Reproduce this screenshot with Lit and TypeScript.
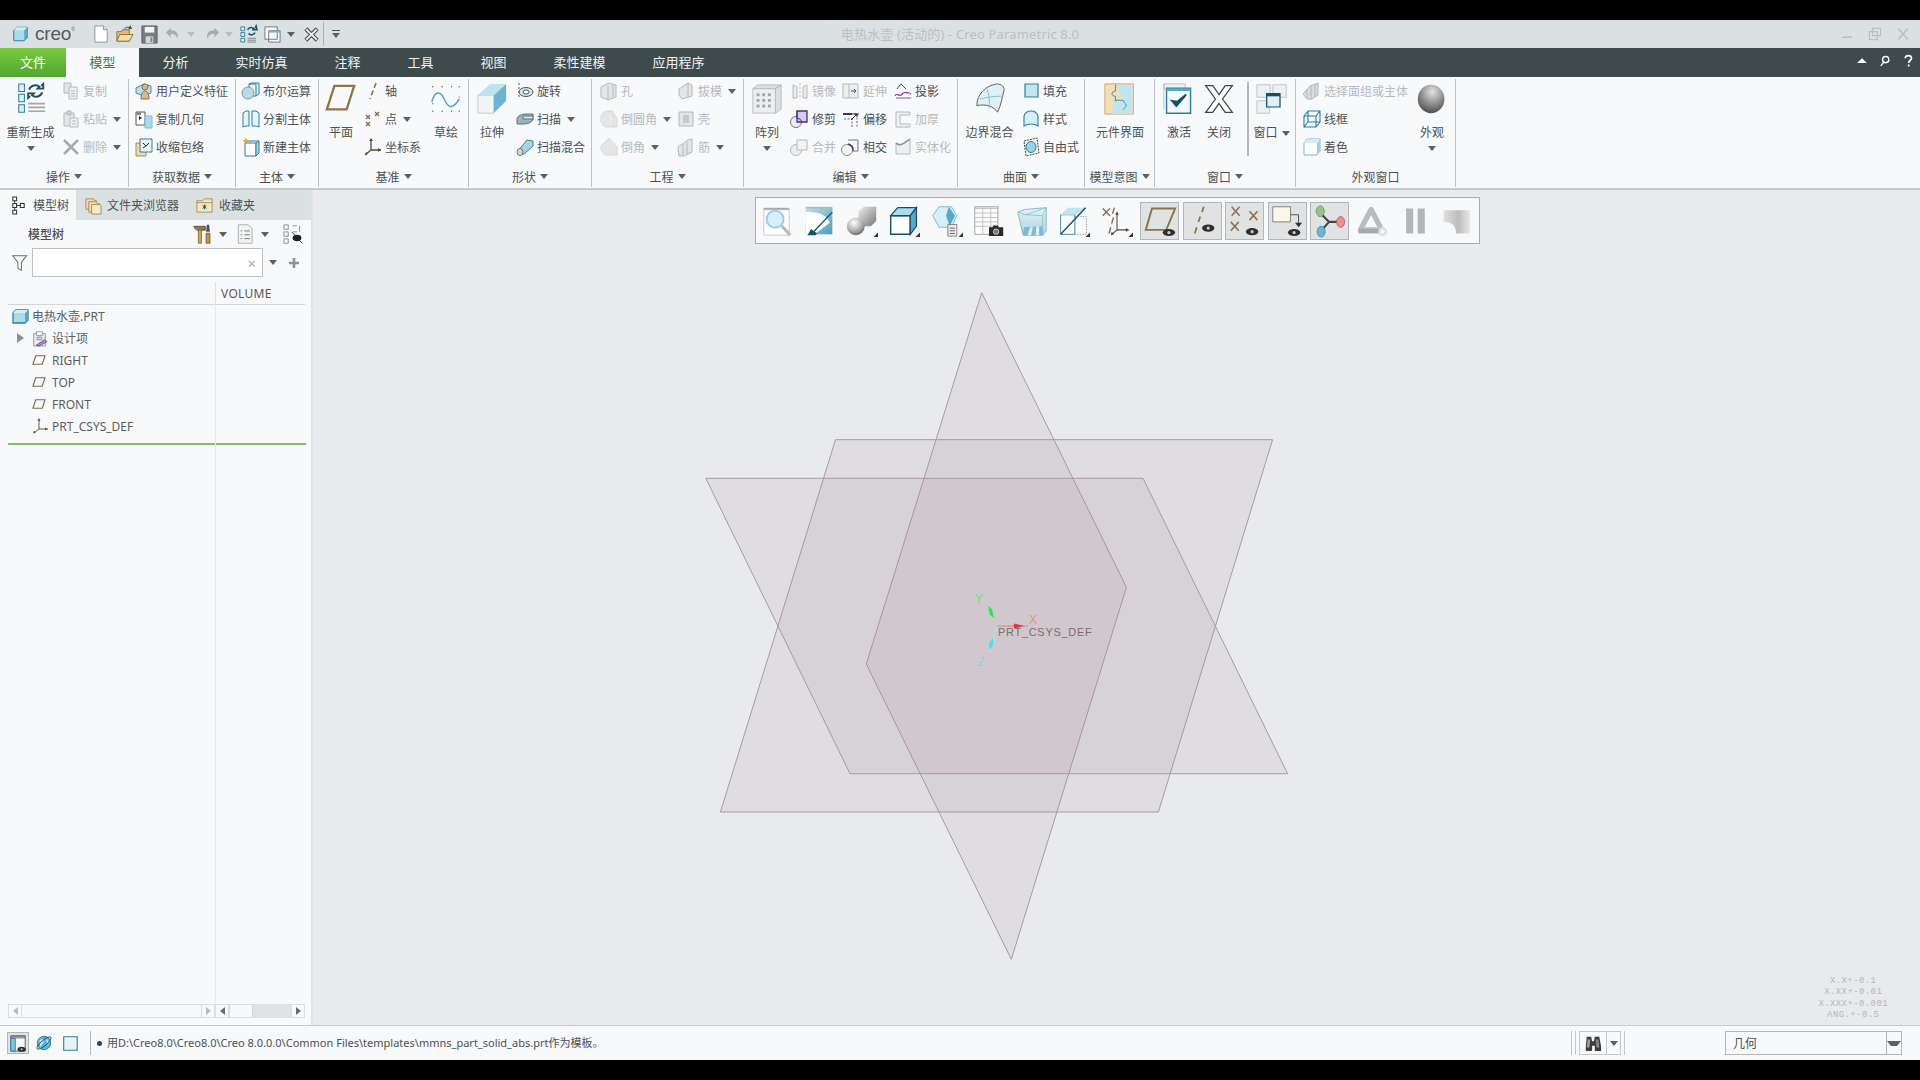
import { LitElement, html, css, svg } from "lit";
import { customElement } from "lit/decorators.js";

const S = (body: unknown, vb = 20) => html`<svg viewBox="0 0 ${vb} ${vb}">${body}</svg>`;
const G = "#b4b8ba", GL = "#e3e5e6", T = "#2b7f9c", C = "#a9dcea", B = "#8a6f45";

const I: Record<string, unknown> = {
  copy: S(svg`<path d="M3 2h7v10H3z" fill="${GL}" stroke="${G}"/><path d="M8 6h8v12H8z" fill="#eef0f1" stroke="${G}"/><path d="M10 10h4M10 12.5h4M10 15h4" stroke="${G}"/>`),
  paste: S(svg`<path d="M3 4h10v13H3z" fill="${GL}" stroke="${G}"/><path d="M6 2h4v4H6z" fill="#d2d4d5" stroke="${G}"/><path d="M9 9h8v9H9z" fill="#f0f1f2" stroke="${G}"/><path d="M11 12h4M11 15h4" stroke="${G}"/>`),
  del: S(svg`<path d="M3 3l14 14M17 3L3 17" stroke="#a6aaac" stroke-width="2.6"/>`),
  udf: S(svg`<path d="M2 7l8-4 7 2v7l-7 3-8-3z" fill="#bcdfee" stroke="#4d8aa5"/><circle cx="11" cy="6" r="3" fill="#d9b98a" stroke="#8a6f45"/><path d="M7 18c0-6 2-8 4-8s4 2 4 8z" fill="#d9b98a" stroke="#8a6f45"/>`),
  copygeo: S(svg`<path d="M2 3h9v13H2z" fill="#fff" stroke="#555"/><path d="M5 7l3 2-3 2z" fill="#222"/><path d="M11 7h7v12h-7z" fill="${C}" stroke="#7bbdd0"/><path d="M2 3h5v3H2z" fill="#888"/>`),
  shrink: S(svg`<path d="M2 6h10v13H2z" fill="#f0d9ad" stroke="#a88a55"/><path d="M6 2h12v13H6z" fill="#e9f6fb" stroke="${T}"/><path d="M9 6l3 3 3-3M9 11l3-2" stroke="#222" fill="none"/>`),
  bool: S(svg`<path d="M8 3l3-1h7v11l-3 2H8z" fill="#e7f3f8" stroke="${T}"/><path d="M15 3v12M8 3h7" stroke="${T}"/><circle cx="7" cy="12" r="6" fill="#b9dbe8" stroke="#7a9aa8"/>`),
  split: S(svg`<path d="M2 4l3-2h3v15H5l-3 1z" fill="#e7f3f8" stroke="${T}"/><path d="M11 2h4l3 2v14l-3-1h-4z" fill="#e7f3f8" stroke="${T}"/>`),
  newbody: S(svg`<path d="M4 6h11v13H4z" fill="#fff" stroke="${T}"/><path d="M15 6l3-2v12l-3 3z" fill="${C}" stroke="${T}"/><path d="M4 6l3-2h11" fill="none" stroke="${T}"/><path d="M5 0l1 3 3 1-3 1-1 3-1-3-3-1 3-1z" fill="#e8a322"/>`),
  axis: S(svg`<path d="M13 2l-6 16" stroke="${B}" stroke-width="1.6" stroke-dasharray="5 3" fill="none"/>`),
  point: S(svg`<path d="M3 6l4 4M7 6l-4 4M12 3l4 4M16 3l-4 4M3 13l4 4M7 13l-4 4" stroke="${B}" stroke-width="1.4" fill="none"/>`),
  csys: S(svg`<path d="M8 2v11M8 13h10M8 13l-6 5" stroke="#554a3a" stroke-width="1.3" fill="none"/><path d="M8 1l2 3H6zM18 13l-3-2v4zM2 18l1-3 2 2z" fill="#554a3a"/>`),
  revolve: S(svg`<ellipse cx="11" cy="11" rx="7" ry="4.5" fill="#cfe7ef" stroke="#555"/><ellipse cx="11" cy="11" rx="3" ry="2" fill="#f7f9fb" stroke="#555"/><path d="M4 2v16" stroke="#555" stroke-dasharray="2 2"/>`),
  sweep: S(svg`<path d="M2 10c0-3 5-5 9-5h7v5c0 3-6 5-9 5H2z" fill="#9eb4bb" stroke="#5f7079"/><path d="M8 7h10v3H8z" fill="#d3eaf2" stroke="#5f7079"/>`),
  blend: S(svg`<path d="M3 14L12 3l6 1v5l-9 8-5 1z" fill="#a9d2e4" stroke="#3f7d99"/><ellipse cx="5" cy="15" rx="3" ry="3.6" fill="#cfd2d3" stroke="#777"/>`),
  hole: S(svg`<path d="M2 6l8-4 7 2v12l-8 3-7-3z" fill="${GL}" stroke="${G}"/><path d="M9 5v14M14 4v12" stroke="${G}"/>`),
  round: S(svg`<path d="M2 9c0-4 3-7 7-7h4l5 7v9H6l-4-5z" fill="${GL}" stroke="#d5d7d8"/><path d="M9 2l5 7v9" fill="#f1f2f3" stroke="#d5d7d8"/>`),
  chamfer: S(svg`<path d="M2 9l7-7h3l6 7v9H6l-4-5z" fill="${GL}" stroke="#d5d7d8"/><path d="M12 2l6 7" stroke="#fff"/>`),
  draft: S(svg`<path d="M3 8l9-6 4 2v11l-10 3-3-4z" fill="${GL}" stroke="${G}"/><path d="M12 2v14" stroke="${G}"/>`),
  shell: S(svg`<path d="M3 3h14v14H3z" fill="${GL}" stroke="${G}"/><path d="M7 6h6v8H7z" fill="#c6c9ca"/>`),
  rib: S(svg`<path d="M2 10l10-7 4-1v13l-8 4H3z" fill="${GL}" stroke="${G}"/><path d="M7 7v11M11 5v12" stroke="${G}"/>`),
  mirror: S(svg`<path d="M3 4l4 2v11H3zM17 4l-4 2v11h4z" fill="#e9ebec" stroke="${G}"/><path d="M10 2v16" stroke="${G}" stroke-dasharray="2 2"/>`),
  extend: S(svg`<path d="M2 3h15v14H2z" fill="#eceeef" stroke="${G}"/><path d="M8 3v14" stroke="${G}"/><path d="M10 10h5M13 8l2 2-2 2" stroke="#555" fill="none"/>`),
  project: S(svg`<path d="M2 15c2-4 4 1 6-1s4-4 10-1" stroke="#8a4fa3" fill="none" stroke-width="1.3"/><path d="M3 17h15" stroke="#8a4fa3"/><path d="M8 3l-4 5M8 3l5 5" stroke="#445" fill="none"/>`),
  trim: S(svg`<circle cx="6" cy="13" r="5.5" fill="#eceeef" stroke="#777"/><path d="M7 2h10v11H7z" fill="#d8c9ef" stroke="#4b2a80" stroke-width="1.3"/><path d="M7 2v7a6 6 0 0 1 5 4" fill="none" stroke="#4b2a80"/>`),
  offset: S(svg`<path d="M2 5h9" stroke="#4b2a80" stroke-width="2"/><path d="M16 5v13" stroke="#666" stroke-dasharray="2 1.5"/><path d="M11 5h7" stroke="#4b2a80"/><path d="M3 10h8v8" fill="none" stroke="#666" stroke-dasharray="2 1.5"/><path d="M10 11l6-6M13 5h3v3" stroke="#222" fill="none"/>`),
  thicken: S(svg`<path d="M3 3h14v3H7v9h10v3H3z" fill="#f0f1f2" stroke="${G}"/>`),
  merge: S(svg`<circle cx="6" cy="13" r="5.5" fill="#eceeef" stroke="${G}"/><path d="M7 3h10v10H7z" fill="#f2f3f4" stroke="${G}"/>`),
  intersect: S(svg`<circle cx="6" cy="13" r="5.5" fill="#f4f5f6" stroke="#888"/><path d="M7 3h10v11h-5" fill="#f4f5f6" stroke="#777"/><path d="M7 7a6 6 0 0 1 5 7" fill="none" stroke="#4b2a80" stroke-width="1.6"/>`),
  solidify: S(svg`<path d="M3 6l5 2 9-6v15H3z" fill="#eceeef" stroke="${G}"/><path d="M3 6c4 4 8 0 14-4" fill="none" stroke="#8d9193" stroke-width="1.5"/>`),
  fill: S(svg`<defs><pattern id="h" width="2.4" height="2.4" patternUnits="userSpaceOnUse" patternTransform="rotate(45)"><rect width="2.4" height="2.4" fill="#b6e0ee"/><path d="M0 0v2.4" stroke="#edf8fb"/></pattern></defs><path d="M4 3h13v13H4z" fill="url(#h)" stroke="#2f7f9e" stroke-width="1.2"/>`),
  style: S(svg`<path d="M3 17V7c1-3 3-5 7-5s6 2 7 5v10c-3-2-5-2-7-2s-4 0-7 2z" fill="#d6eef6" stroke="#2f7f9e" stroke-width="1.1"/>`),
  freestyle: S(svg`<path d="M3 4l13-3 2 15-13 3z" fill="#f3f5f6" stroke="#444" stroke-dasharray="2 1"/><ellipse cx="10" cy="10" rx="5" ry="5.5" fill="#9ad3e6" stroke="#2f7f9e"/>`),
  selbody: S(svg`<path d="M1 13l7-8 8-3v12l-6 4H5z" fill="#d9dbdc" stroke="${G}"/><path d="M5 8v9M9 5v13M13 3v12" stroke="${G}"/>`),
  wire: S(svg`<path d="M2 7h12v11H2zM6 2h12v11H6zM2 7l4-5M14 7l4-5M14 18l4-5M2 18l4-5" fill="none" stroke="${T}" stroke-width="1.1"/>`),
  shade: S(svg`<path d="M2 6l3-4h13v12l-3 4H2z" fill="#fff" stroke="#7fb9cf"/><path d="M15 6l3-4v12l-3 4z" fill="#9ed3e6"/><path d="M2 6l3-4h13l-3 4z" fill="#d3edf5"/>`),

  regen: S(svg`<path d="M4 1h6v8H4zM4 12h6v8H4zM4 23h6v8H4z" fill="#dff1f7" stroke="${T}" stroke-width="1.1"/><path d="M15 7a7 7 0 0 1 11-3l-2 2h6V1l-2 2" fill="none" stroke="#1d4e63" stroke-width="2"/><path d="M29 10a7 7 0 0 1-11 3l2-2h-6v5l2-2" fill="none" stroke="#1d4e63" stroke-width="2"/><path d="M14 22h18M14 26h18M14 30h18" stroke="#a4a4a4" stroke-width="1.8"/>`, 34),
  plane: S(svg`<path d="M10 3h21l-8 25H2z" fill="#f7f9fb" stroke="#8f7444" stroke-width="2.4"/>`, 34),
  sketch: S(svg`<g fill="#555"><circle cx="3" cy="4" r=".7"/><circle cx="13" cy="4" r=".7"/><circle cx="23" cy="4" r=".7"/><circle cx="31" cy="4" r=".7"/><circle cx="3" cy="30" r=".7"/><circle cx="13" cy="30" r=".7"/><circle cx="23" cy="30" r=".7"/><circle cx="31" cy="30" r=".7"/><circle cx="31" cy="15" r=".7"/><circle cx="3" cy="22" r=".7"/></g><path d="M2 20c3-12 9-12 13-3s9 12 16 0" fill="none" stroke="#4da6c8" stroke-width="1.6"/>`, 34),
  extrude: S(svg`<path d="M2 13h17v19H2z" fill="#f3f4f5" stroke="#c6c8c9"/><path d="M2 13L15 1h17L19 13z" fill="#bfe2ef"/><path d="M19 13L32 1v18L19 32z" fill="#6fb4cf"/>`, 34),
  pattern: S(svg`<path d="M2 6h24v26H2z" fill="#eceeef" stroke="#b9bcbe"/><path d="M2 6l5-4h25l-6 4zM26 6l6-4v26l-6 4z" fill="#dcdfe0" stroke="#b9bcbe"/><g fill="#a0a4a6"><rect x="6" y="11" width="3" height="3"/><rect x="12" y="11" width="3" height="3"/><rect x="18" y="11" width="3" height="3"/><rect x="6" y="17" width="3" height="3"/><rect x="12" y="17" width="3" height="3"/><rect x="18" y="17" width="3" height="3"/><rect x="6" y="23" width="3" height="3"/><rect x="12" y="23" width="3" height="3"/><rect x="18" y="23" width="3" height="3"/></g>`, 34),
  boundary: S(svg`<path d="M3 24C3 12 12 3 24 1c6 0 8 4 8 6-2 8-3 16-7 24-4-6-12-9-22-7z" fill="#dff1f7" stroke="#555"/><path d="M14 7c2 6 3 12 2 20M6 17c8-2 16-3 25-3" fill="none" stroke="#8cbccc"/>`, 34),
  iface: S(svg`<path d="M1 1h32v34H1z" fill="#f4dfb5" stroke="#c9a567"/><path d="M13 2h19v33H9v-4c2-1 4-2 4-4s-3-3-3-5 4-3 6-3 5 1 5 3-3 3-3 5H9v8M13 2v7c-2 0-4 1-4 3s2 3 4 3v6h10" fill="#bfe5f1"/><path d="M13 2v7c-3 0-4 2-4 3s1 3 4 3v5c2-1 7-1 9 0 0 3 3 3 3 5s-3 3-3 5" fill="none" stroke="#3f7d99"/>`, 36),
  activate: S(svg`<path d="M1 1h24v6H1z" fill="#eef0f1" stroke="#bbb"/><path d="M1 1v28" stroke="#bbb"/><path d="M4 6h27v28H4z" fill="#f3fafd" stroke="#2b7f9c" stroke-width="1.6"/><path d="M4 6h27v3H4z" fill="#5ba8c4"/><path d="M10 20l5 6 11-13-10 8z" fill="#14506c" stroke="#14506c" stroke-width="2"/>`, 36),
  closeX: S(svg`<path d="M3 3h8l7 10 7-10h8L22 18l11 15h-8l-7-10-7 10H3l11-15z" fill="#fff" stroke="#404548" stroke-width="1.4"/>`, 36),
  windows: S(svg`<path d="M1 2h15v14H1zM19 2h15v14H19zM1 20h14v14H1z" fill="#eef0f1" stroke="#bdbfc0"/><path d="M12 12h15v15H12z" fill="#ddf0f7" stroke="#14506c" stroke-width="1.4"/><path d="M12 12h15v3H12z" fill="#14506c"/>`, 36),
  sphere: S(svg`<defs><radialGradient id="sp" cx=".55" cy=".25" r=".85"><stop offset="0" stop-color="#e4e4e4"/><stop offset=".5" stop-color="#8e8e8e"/><stop offset="1" stop-color="#3c3c3c"/></radialGradient></defs><ellipse cx="17" cy="18" rx="15" ry="16" fill="url(#sp)"/>`, 36),

  tbZoom: S(svg`<path d="M3 5h27v27H3z" fill="#fff" stroke="#c8c8c8"/><path d="M3 3h27v2H3z" fill="#aaa"/><circle cx="15" cy="15" r="9" fill="#d7f0f9" stroke="#9ccbdc" stroke-width="2"/><path d="M22 22l9 10" stroke="#bbb" stroke-width="3.2"/>`, 34),
  tbFit: S(svg`<defs><linearGradient id="fg" x1="0" y1="0" x2="1" y2="1"><stop offset="0" stop-color="#bfe2ef"/><stop offset="1" stop-color="#4f9dbb"/></linearGradient></defs><path d="M3 3h30v30H3z" fill="url(#fg)"/><path d="M3 2h30v2H3z" fill="#b8b8b8"/><path d="M3 8c14-1 25 4 27 12L13 33H3z" fill="#fff"/><path d="M5 34l4-7 7 5-2 2z" fill="#14506c"/><path d="M12 30L33 8" stroke="#14506c" stroke-width="1.5"/>`, 36),
  tbShade: S(svg`<defs><radialGradient id="sp2" cx=".4" cy=".3" r=".8"><stop offset="0" stop-color="#fff"/><stop offset=".6" stop-color="#aaa"/><stop offset="1" stop-color="#555"/></radialGradient><linearGradient id="gb" x1="0" y1="0" x2="1" y2="1"><stop offset="0" stop-color="#eee"/><stop offset="1" stop-color="#777"/></linearGradient></defs><path d="M14 7l6-5h14v16l-6 6H14z" fill="url(#gb)"/><circle cx="11" cy="24" r="10" fill="url(#sp2)"/><path d="M36 36h-5l5-5z" fill="#333"/>`, 36),
  tbView: S(svg`<path d="M3 12h22v21H3z" fill="#fff" stroke="#14506c" stroke-width="1.6"/><path d="M3 12l8-9h21l-7 9z" fill="#a9dcea" stroke="#14506c" stroke-width="1.4"/><path d="M25 12l7-9v21l-7 9z" fill="#5ba8c4" stroke="#14506c" stroke-width="1.4"/><path d="M36 36h-5l5-5z" fill="#333"/>`, 36),
  tbManage: S(svg`<path d="M2 12L9 2h14l6 10-6 13H9z" fill="#d6eef6" stroke="#6fb4cf"/><path d="M20 2l7 10-6 12-4-12z" fill="#5ba8c4"/><path d="M19 22h10v13H19z" fill="#eee" stroke="#777"/><path d="M21 26h6M21 29h6M21 32h6" stroke="#555"/><path d="M36 36h-5l5-5z" fill="#333"/>`, 36),
  tbTable: S(svg`<path d="M2 2h26v31H2z" fill="#fff" stroke="#9a9a9a"/><path d="M2 2h26v2H2zM2 9h26M2 14h26M2 19h26M2 24h26M11 4v29M20 4v29" stroke="#bbb" fill="none"/><path d="M18 25h4l1-2h5l1 2h5v10H18z" fill="#2b2b2b"/><circle cx="26" cy="30" r="3" fill="#777" stroke="#ddd"/>`, 36),
  tbSection: S(svg`<defs><linearGradient id="sc" x1="0" y1="0" x2="0" y2="1"><stop offset="0" stop-color="#e4f3f8"/><stop offset="1" stop-color="#a9d3e1"/></linearGradient></defs><path d="M2 8l8-3 24-2v26l-4 5H8z" fill="url(#sc)" stroke="#7bb4c7"/><path d="M2 8l9 3 23-8M11 11l19 1 4-9M30 12v22" fill="none" stroke="#8fc0d0"/><path d="M9 25l21-1v10H8z" fill="#7fb9cd"/><path d="M13 34l3-9h3l-2 9zM22 34l1-10h3v10z" fill="#dff1f6"/>`, 36),
  tbCut: S(svg`<path d="M3 11h16v22H3z" fill="#fff" stroke="#2b7f9c"/><path d="M3 11l8-8h21l-13 8z" fill="#bfe5f1"/><path d="M3 33L31 3" stroke="#14506c" stroke-width="1.6"/><path d="M19 13h13v20H11" fill="none" stroke="#888" stroke-dasharray="1.5 1.5"/><path d="M36 36h-5l5-5z" fill="#333"/>`, 36),
  tbDisp: S(svg`<path d="M2 4l8 8M10 4l-8 8" stroke="${B}" stroke-width="1.6"/><path d="M15 3l-2 7M14 14l-2 7M11 25l-2 7" stroke="${B}" stroke-width="1.6"/><path d="M18 28V10M18 28h12M18 28l-6 5" stroke="#554a3a" stroke-width="1.2" fill="none"/><path d="M18 7l2 4h-4zM32 28l-4-2v4zM11 34l1-4 3 3z" fill="#554a3a"/><path d="M36 36h-5l5-5z" fill="#333"/>`, 36),
  eyePlane: S(svg`<path d="M9 4h26l-10 24H2z" fill="none" stroke="#8f7444" stroke-width="2.2"/><ellipse cx="28" cy="31" rx="7" ry="4" fill="#2e2e2e"/><circle cx="28" cy="31" r="1.8" fill="#ccc"/>`, 36),
  eyeAxis: S(svg`<path d="M20 2l-2 6M16 13l-2 6M12 25l-2 7" stroke="#8f7444" stroke-width="2"/><ellipse cx="25" cy="26" rx="7" ry="4" fill="#2e2e2e"/><circle cx="25" cy="26" r="1.8" fill="#ccc"/>`, 36),
  eyePoint: S(svg`<path d="M3 2l9 10M12 2L3 12M23 7l9 10M32 7l-9 10M2 19l9 10M11 19l-9 10" stroke="#8f7444" stroke-width="1.8"/><ellipse cx="26" cy="30" rx="7" ry="4" fill="#2e2e2e"/><circle cx="26" cy="30" r="1.8" fill="#ccc"/>`, 36),
  eyeNote: S(svg`<path d="M2 2h20v17H2z" fill="#fdf6e6" stroke="#777"/><path d="M22 11h9v10" fill="none" stroke="#444"/><path d="M27 20h8l-4 5z" fill="#333"/><ellipse cx="26" cy="31" rx="7" ry="4" fill="#2e2e2e"/><circle cx="26" cy="31" r="1.8" fill="#ccc"/>`, 36),
  tbTree: S(svg`<path d="M7 9l10 10 13 0M17 19L8 29" stroke="#444" stroke-width="2.4" fill="none"/><ellipse cx="7" cy="7" rx="4.5" ry="6" fill="#98c48a" stroke="#6b9a5f"/><ellipse cx="30" cy="19" rx="4.5" ry="6" fill="#ef8f8a" stroke="#b5625e"/><ellipse cx="8" cy="30" rx="4.5" ry="6" fill="#6fb4d6" stroke="#4b8cab"/>`, 36),
  tbPlay: S(svg`<path d="M17 5l12 23H5z" fill="none" stroke="#b9bbbc" stroke-width="6" stroke-linejoin="round"/><path d="M3 27h26v5H3z" fill="#a6a9aa"/><circle cx="30" cy="30" r="5" fill="#dcdedf"/><path d="M28 27l5 3-5 3z" fill="#fff"/>`, 36),
  tbPause: S(svg`<path d="M8 4h8v28H8zM21 4h8v28h-8z" fill="#b3b6b7"/>`, 36),
  tbFinish: S(svg`<defs><linearGradient id="fn" x1="0" y1="0" x2="1" y2="0"><stop offset="0" stop-color="#dfdfdf"/><stop offset=".55" stop-color="#bdbdbd"/><stop offset="1" stop-color="#e8e8e8"/></linearGradient></defs><path d="M3 6h30v26H17c0-8-4-13-14-13z" fill="url(#fn)"/>`, 36),

  tabTree: S(svg`<path d="M4 1h4v4H4zM4 8h4v4H4zM4 15h4v4H4zM12 8h4v4h-4z" fill="#fff" stroke="#333" stroke-width="1.1"/><path d="M6 5v3M6 12v3M8 10h4" stroke="#333"/>`),
  tabFolders: S(svg`<path d="M2 3h8l1 2h2v9H2z" fill="#f1dcae" stroke="#a78d5c"/><path d="M5 6h8l1 2h2v9H5z" fill="#f1dcae" stroke="#a78d5c"/><path d="M8 9h9l1 2v8H8z" fill="#f7e8c5" stroke="#a78d5c"/>`),
  tabFav: S(svg`<path d="M2 5h6l2-2h8v14H2z" fill="#f5e6c4" stroke="#a78d5c"/><path d="M2 7h16" stroke="#a78d5c"/><path d="M10 9v5M8 10l4 3M12 10l-4 3" stroke="#14506c"/>`),
  hammer: S(svg`<path d="M1 3h15v5h-5v1H7V8c-3 0-5-2-6-5z" fill="#8a7a58" stroke="#4b3f28"/><path d="M7 8h4v17H7z" fill="#d3a95f" stroke="#7a5b2b"/><path d="M18 1h3l1 9h-5z" fill="#50514f"/><path d="M17 12h5v13h-5z" fill="#c8943f" stroke="#6c4b1e"/>`, 26),
  list: S(svg`<path d="M3 1h13l5 5v19H3z" fill="#f2f3f4" stroke="#9a9ea0"/><path d="M6 9h2M11 9h7M6 14h2M11 14h7M6 19h2M11 19h7" stroke="#555"/>`, 26),
  hide: S(svg`<path d="M1 1h5v5H1zM1 9h5v5H1zM1 17h5v5H1zM11 2h5M19 2v7M11 9h5" fill="none" stroke="#8c9092" stroke-width="1.1"/><ellipse cx="16" cy="16" rx="5" ry="3.6" fill="#222"/><path d="M10 9l12 13" stroke="#222"/>`, 24),
  filter: S(svg`<path d="M1 2h16l-6 8v9l-4-2v-7z" fill="#fff" stroke="#676b6d" stroke-width="1.2"/>`, 20),
  plus: S(svg`<path d="M6 1v10M1 6h10" stroke="#8f9395" stroke-width="2.6"/>`, 12),
  prt: S(svg`<path d="M1 5l3-3h12v10l-3 3H1z" fill="#a9dcea" stroke="#2b7f9c" stroke-width="1.3"/><path d="M13 5l3-3v10l-3 3z" fill="#5ba8c4"/><path d="M1 5l3-3h12l-3 3z" fill="#d3edf5"/>`, 17),
  design: S(svg`<path d="M2 4h13v14H2z" fill="#e9eef0" stroke="#8c9092"/><path d="M5 2h7v4H5z" fill="#fff" stroke="#8c9092"/><path d="M6 8h5v3H6z" fill="#ddd" stroke="#888"/><path d="M5 17l9-6 3 2-9 5z" fill="#a78bd1" stroke="#6d4fa0"/>`, 18),
  planeS: S(svg`<path d="M4 3h10l-3 9H1z" fill="none" stroke="#7d6a45" stroke-width="1.2"/>`, 15),
  csysS: S(svg`<path d="M7 1v10M7 11h9M7 11l-5 4" stroke="#6a5a3d" fill="none"/><path d="M7 0l1.5 3h-3zM16 11l-3-1.5v3zM1 15.5l1-3 2 2z" fill="#6a5a3d"/>`, 17),

  stLayout: S(svg`<path d="M2 2h16v17H2z" fill="#f7f9fb" stroke="#555"/><path d="M2 2h16v3H2z" fill="#555" opacity=".6"/><path d="M2 5h5v14H2z" fill="#7ec6e0" stroke="#2b7f9c"/><ellipse cx="14" cy="17" rx="4.5" ry="2.8" fill="#2e2e2e"/><circle cx="14" cy="17" r="1.1" fill="#ccc"/>`),
  stGlobe: S(svg`<circle cx="10" cy="10" r="7.5" fill="#5fb5df" stroke="#356f90"/><path d="M5 7c3-3 6 0 4 3s-3 3-3 6M12 5c3 2 4 4 2 7" fill="#cfeaf6"/><ellipse cx="10" cy="10" rx="10" ry="3" transform="rotate(-40 10 10)" fill="none" stroke="#1d4e63"/>`),
  stSquare: S(svg`<path d="M3 3h15v15H3z" fill="#e8f3f8" stroke="#2b7f9c" stroke-width="1.2"/>`),
  binoc: S(svg`<path d="M3 3h5l1 5h2l1-5h5l2 11v5h-7v-6H9v6H2v-5z" fill="#3e3e3e"/><path d="M4 6h3l-1 9H3z" fill="#9a9a9a"/><path d="M13 6h3l1 9h-3z" fill="#8a8a8a"/>`),
};

const tri = html`<span class="tri"></span>`;

type Small = { i: string; t: string; d?: boolean; a?: boolean };
type Col = { w: number; big?: { i: string; t: string; a?: "below" | "inline" }; items?: Small[] };
type Group = { label: string; w: number; pad?: number; a?: boolean; cols: Col[]; sepAfter?: number };

const groups: Group[] = [
  { label: "操作", w: 129, a: true, cols: [
    { w: 61, big: { i: "regen", t: "重新生成", a: "below" } },
    { w: 68, items: [{ i: "copy", t: "复制", d: true }, { i: "paste", t: "粘贴", d: true, a: true }, { i: "del", t: "删除", d: true, a: true }] } ] },
  { label: "获取数据", w: 107, pad: 5, a: true, cols: [
    { w: 102, items: [{ i: "udf", t: "用户定义特征" }, { i: "copygeo", t: "复制几何" }, { i: "shrink", t: "收缩包络" }] } ] },
  { label: "主体", w: 83, pad: 5, a: true, cols: [
    { w: 78, items: [{ i: "bool", t: "布尔运算" }, { i: "split", t: "分割主体" }, { i: "newbody", t: "新建主体" }] } ] },
  { label: "基准", w: 150, a: true, cols: [
    { w: 44, big: { i: "plane", t: "平面" } },
    { w: 60, items: [{ i: "axis", t: "轴" }, { i: "point", t: "点", a: true }, { i: "csys", t: "坐标系" }] },
    { w: 46, big: { i: "sketch", t: "草绘" } } ] },
  { label: "形状", w: 123, a: true, cols: [
    { w: 46, big: { i: "extrude", t: "拉伸" } },
    { w: 77, items: [{ i: "revolve", t: "旋转" }, { i: "sweep", t: "扫描", a: true }, { i: "blend", t: "扫描混合" }] } ] },
  { label: "工程", w: 152, pad: 7, a: true, cols: [
    { w: 77, items: [{ i: "hole", t: "孔", d: true }, { i: "round", t: "倒圆角", d: true, a: true }, { i: "chamfer", t: "倒角", d: true, a: true }] },
    { w: 68, items: [{ i: "draft", t: "拔模", d: true, a: true }, { i: "shell", t: "壳", d: true }, { i: "rib", t: "筋", d: true, a: true }] } ] },
  { label: "编辑", w: 214, a: true, cols: [
    { w: 46, big: { i: "pattern", t: "阵列", a: "below" } },
    { w: 51, items: [{ i: "mirror", t: "镜像", d: true }, { i: "trim", t: "修剪" }, { i: "merge", t: "合并", d: true }] },
    { w: 52, items: [{ i: "extend", t: "延伸", d: true }, { i: "offset", t: "偏移" }, { i: "intersect", t: "相交" }] },
    { w: 65, items: [{ i: "project", t: "投影" }, { i: "thicken", t: "加厚", d: true }, { i: "solidify", t: "实体化", d: true }] } ] },
  { label: "曲面", w: 127, a: true, cols: [
    { w: 63, big: { i: "boundary", t: "边界混合" } },
    { w: 64, items: [{ i: "fill", t: "填充" }, { i: "style", t: "样式" }, { i: "freestyle", t: "自由式" }] } ] },
  { label: "模型意图", w: 70, a: true, cols: [ { w: 70, big: { i: "iface", t: "元件界面" } } ] },
  { label: "窗口", w: 141, a: true, sepAfter: 1, cols: [
    { w: 48, big: { i: "activate", t: "激活" } },
    { w: 32, big: { i: "closeX", t: "关闭" } },
    { w: 45, big: { i: "windows", t: "窗口", a: "inline" } } ] },
  { label: "外观窗口", w: 160, pad: 6, cols: [
    { w: 110, items: [{ i: "selbody", t: "选择面组或主体", d: true }, { i: "wire", t: "线框" }, { i: "shade", t: "着色" }] },
    { w: 40, big: { i: "sphere", t: "外观", a: "below" } } ] },
];

const menus = ["分析", "实时仿真", "注释", "工具", "视图", "柔性建模", "应用程序"];

const tools: { i: string; on?: boolean }[] = [
  { i: "tbZoom" }, { i: "tbFit" }, { i: "tbShade" }, { i: "tbView" }, { i: "tbManage" }, { i: "tbTable" }, { i: "tbSection" }, { i: "tbCut" }, { i: "tbDisp" },
  { i: "eyePlane", on: true }, { i: "eyeAxis", on: true }, { i: "eyePoint", on: true }, { i: "eyeNote", on: true }, { i: "tbTree", on: true },
  { i: "tbPlay" }, { i: "tbPause" }, { i: "tbFinish" },
];

const qat: { w: number; k: string }[] = [
  { w: 21, k: "new" }, { w: 24, k: "open" }, { w: 27, k: "save" }, { w: 20, k: "undo" }, { w: 16, k: "c" }, { w: 24, k: "redo" }, { w: 12, k: "c" },
  { w: 26, k: "regen" }, { w: 22, k: "win" }, { w: 16, k: "cd" }, { w: 24, k: "close" },
];
const Q: Record<string, unknown> = {
  new: S(svg`<path d="M3 1h9l4 4v13H3z" fill="#fff" stroke="#8c9092"/><path d="M12 1v4h4" fill="#dfe2e3" stroke="#8c9092"/>`),
  open: S(svg`<path d="M2 7h5l1-2h7v12H2z" fill="#e3bd72" stroke="#8f6f33"/><path d="M2 17l3-7h14l-4 7z" fill="#f4dea9" stroke="#8f6f33"/><path d="M10 4c2-2 4-2 6-1" fill="none" stroke="#444"/><path d="M16 0l2 4-4 .5z" fill="#444"/>`),
  save: S(svg`<path d="M2 1h16v18H2z" fill="#777c7f" stroke="#5f6467"/><path d="M5 2h10v6H5z" fill="#f3f4f5"/><path d="M6 12h8v7H6z" fill="#d6d8da"/><path d="M11 13h2v5h-2z" fill="#5e8ba0"/>`),
  undo: S(svg`<path d="M7 3L2 8l5 5V9.5c4-.5 6 1 7 5 2-6-1-9-7-9z" fill="#a9adaf"/>`),
  redo: S(svg`<path d="M13 3l5 5-5 5V9.5c-4-.5-6 1-7 5-2-6 1-9 7-9z" fill="#a9adaf"/>`),
  c: html`<span class="tri light"></span>`,
  cd: html`<span class="tri"></span>`,
  regen: S(svg`<path d="M2 2h4v4H2zM2 8h4v4H2zM2 14h4v4H2z" fill="#dff1f7" stroke="${T}"/><path d="M9 14h9M9 16h9M9 18h9" stroke="#7e8285"/><path d="M9 5c2-3 5-3 7-1l-2 1h5l-1-4-1 2" fill="none" stroke="#1d4e63" stroke-width="1.6"/><path d="M17 8c-2 3-5 3-7 1" fill="none" stroke="#1d4e63" stroke-width="1.6"/>`),
  win: S(svg`<path d="M2 2h13v13H2zM6 6h12v12H6z" fill="#f7f9fb" stroke="#70767a"/><path d="M6 6h12v2H6z" fill="#7ab1c6"/>`),
  close: S(svg`<path d="M4 4l12 12M16 4L4 16" stroke="#555" stroke-width="4.4"/><path d="M4.5 4.5l11 11M15.5 4.5l-11 11" stroke="#f4f6f7" stroke-width="1.8"/>`),
};

@customElement("app-root")
export class AppRoot extends LitElement {
  static styles = css`
    :host { display: block; width: 1920px; height: 1080px; overflow: hidden; background: #000;
      font-family: "Noto Sans", "Noto Sans CJK SC", sans-serif; font-size: 12px; color: #45494b; }
    * { box-sizing: border-box; }
    svg { display: block; width: 100%; height: 100%; overflow: visible; }
    .frame { display: flex; flex-direction: column; height: 1080px; padding: 20px 0; }

    .title { height: 28px; flex: none; background: #dbe1e3; display: grid; grid-template-columns: 1fr auto 1fr; align-items: center; }
    .t-left { display: flex; align-items: center; padding-left: 13px; }
    .logo { width: 15px; height: 16px; }
    .creo { width: 63px; padding-left: 7px; font: 19px "Liberation Sans", sans-serif; color: #555b5e; letter-spacing: -.2px; line-height: 20px; white-space: nowrap; }
    .creo sup { font-size: 5px; vertical-align: 9px; line-height: 0; }
    .qa { display: flex; justify-content: center; align-items: center; }
    .qa svg { width: 19px; height: 19px; }
    .qsep { width: 1px; height: 24px; background: #a9aeb0; }
    .custom { width: 24px; display: flex; flex-direction: column; align-items: center; gap: 2px; }
    .custom i { width: 8px; height: 1px; background: #4a5053; }
    .t-mid { color: #b9bfc2; font-size: 13px; white-space: nowrap; letter-spacing: .15px; padding-bottom: 1px; }
    .t-right { display: flex; justify-content: flex-end; gap: 12px; padding-right: 9px; }
    .wc { width: 16px; height: 16px; }

    .menu { height: 29px; flex: none; background: #3f4a4c; display: flex; align-items: stretch; color: #f1f3f4; font-size: 13px; }
    .m { display: flex; align-items: center; padding: 0 23.5px 2px; white-space: nowrap; }
    .file { width: 66px; justify-content: center; padding: 0 0 2px; color: #fff; background: linear-gradient(180deg, #7bc843, #4fa82e); }
    .m.on { width: 73px; justify-content: center; padding: 0 0 2px; background: #f7f9fb; color: #3f7f3a; }
    .m-right { margin-left: auto; display: flex; align-items: center; gap: 9px; padding-right: 5px; padding-bottom: 3px; }
    .m-right span { width: 14px; height: 14px; }

    .ribbon { height: 113px; flex: none; background: #f7f9fb; border-bottom: 2px solid #c4c8ca; display: flex; padding-top: 2px; }
    .grp { display: flex; flex-direction: column; flex: none; border-right: 1px solid #bcc0c2; height: 108px; }
    .g-body { flex: 1; display: flex; min-height: 0; }
    .g-label { height: 24px; flex: none; display: flex; align-items: center; justify-content: center; gap: 4px; color: #4d5153; padding-top: 3px; white-space: nowrap; }
    .col { display: flex; flex-direction: column; flex: none; margin-top: -2px; }
    .it { height: 28px; display: flex; align-items: center; white-space: nowrap; color: #4d5153; }
    .it .ic { width: 20px; height: 20px; flex: none; margin-right: 2px; }
    .it.d { color: #b6babc; }
    .big { display: flex; flex-direction: column; align-items: center; flex: none; padding-top: 4px; color: #4d5153; white-space: nowrap; }
    .big .ic { width: 32px; height: 32px; }
    .big .lb { margin-top: 9px; line-height: 18px; display: flex; align-items: center; gap: 4px; }
    .big .below { margin-top: 4px; height: 5px; display: flex; }
    .big .below .tri { margin: 0; }
    .tri { display: inline-block; width: 0; height: 0; border: 4px solid transparent; border-top: 5px solid #5b6063; border-bottom: 0; margin-left: 6px; }
    .tri.light { border-top-color: #b9bdbf; margin: 0; }
    .g-label .tri, .big .lb .tri { margin-left: 0; }
    .qa .tri { margin: 0; }
    .m0 { margin: 0; }
    .vsep { width: 2px; height: 74px; background: #b3b7b9; margin: 3px 0 0 12px; flex: none; }

    .main { flex: 1; display: flex; min-height: 0; }
    .side { width: 313px; flex: none; display: flex; flex-direction: column; background: #f7f9fb; border-right: 2px solid #dfe3e6; }
    .tabs { height: 30px; flex: none; display: flex; background: #dbe1e3; }
    .tab { display: flex; align-items: center; white-space: nowrap; color: #4d5153; gap: 5px; }
    .tab.on { background: #f7f9fb; width: 76px; padding-left: 9px; }
    .tab .ic { width: 19px; height: 19px; flex: none; }
    .tab.t2 { padding-left: 8px; width: 116px; gap: 4px; }
    .tab.t3 { padding-left: 3px; gap: 5px; }
    .tools { height: 28px; flex: none; display: flex; align-items: center; padding-left: 28px; }
    .tools b { font-weight: 500; width: 165px; color: #4a4e50; }
    .tools .t1 { width: 20px; height: 20px; margin: 0 6px 0 0; }
    .tools .t2 { width: 20px; height: 20px; margin: 0 5px 0 9px; }
    .tools .t3 { width: 21px; height: 21px; margin-left: 14px; }
    .filterrow { height: 29px; flex: none; display: flex; align-items: center; padding-left: 12px; }
    .fl { width: 17px; height: 17px; margin-right: 3px; }
    .input { width: 231px; height: 29px; background: #fff; border: 1px solid #bdc1c3; display: flex; justify-content: flex-end; align-items: center; padding-right: 6px; color: #a7abad; font-size: 15px; }
    .pad-caret { margin: 0 0 0 6px; }
    .plus { width: 12px; height: 12px; margin-left: 11px; }
    .treewrap { flex: 1; min-height: 0; display: flex; flex-direction: column; margin: 5px 6px 0 8px; }
    .thead { height: 23px; flex: none; display: grid; grid-template-columns: 207px 1fr; border-bottom: 1px solid #d2d6d8; }
    .thead span:last-child { border-left: 1px solid #dde0e2; padding-left: 5px; line-height: 24px; color: #555a5c; letter-spacing: .3px; }
    .tb { flex: 1; display: grid; grid-template-columns: 207px 1fr; min-height: 0; }
    .tb .l { display: flex; flex-direction: column; }
    .tb .r { border-left: 1px solid #e6e9ea; }
    .row { height: 22px; flex: none; display: flex; align-items: center; color: #5a5e60; white-space: nowrap; font-size: 12px; }
    .r0 { padding-left: 4px; } .r0 .ic { width: 17px; height: 17px; margin-right: 3px; flex: none; }
    .r1 { padding-left: 24px; } .r1 .ic { width: 14px; height: 14px; margin-right: 6px; flex: none; }
    .r2 .ic { width: 16px; height: 16px; margin: 0 4px 0 8px; flex: none; }
    .r3 { padding-left: 24px; } .r3 .ic { width: 17px; height: 17px; margin-right: 3px; flex: none; }
    .exp { width: 0; height: 0; border: 5px solid transparent; border-left: 7px solid #8b8f91; border-right: 0; margin-left: 9px; flex: none; }
    .green { height: 2px; flex: none; width: 298px; background: #7dc067; margin-top: 6px; }
    .sb { height: 14px; flex: none; display: grid; grid-template-columns: 207px 1fr; margin-bottom: 7px; }
    .bar { display: flex; border: 1px solid #dcdfe1; background: #f7f9fb; align-items: stretch; }
    .ar { width: 13px; flex: none; display: flex; align-items: center; justify-content: center; }
    .ar.b { border-right: 1px solid #dcdfe1; }
    .ar.bl { border-left: 1px solid #dcdfe1; }
    .al { width: 0; height: 0; border: 4px solid transparent; border-right: 5px solid #b6babc; border-left: 0; }
    .arr { width: 0; height: 0; border: 4px solid transparent; border-left: 5px solid #b6babc; border-right: 0; }
    .al.dk { border-right-color: #6a6e70; } .arr.dk { border-left-color: #6a6e70; }
    .trk { flex: 1; }
    .thumb { width: 24px; background: #f7f9fb; border-left: 1px solid #d2d6d8; border-right: 1px solid #d2d6d8; }
    .rest { flex: 1; background: #e0e2e4; }

    .canvas { flex: 1; position: relative; background: #e8eaee; min-width: 0; }
    .canvas > svg { position: absolute; inset: 0; }
    .toolbar { position: absolute; left: 441.5px; top: 7px; width: 725px; height: 47px; background: #f7f9fb; border: 1px solid #a9acae; display: flex; align-items: center; }
    .tool { flex: 1; height: 38px; display: flex; align-items: center; justify-content: center; }
    .tool .in { width: 39px; height: 38px; display: flex; align-items: center; justify-content: center; }
    .tool .in svg { width: 32px; height: 32px; }
    .tool.on .in { background: #e0e2e4; border: 1px solid #b3b6b8; }
    .dims { position: absolute; right: 32px; bottom: 4px; display: flex; flex-direction: column; align-items: center; font: 9px/11.2px "Liberation Mono", monospace; letter-spacing: .4px; color: #b4b7ba; white-space: pre; }

    .status { height: 35px; flex: none; background: #f7f9fb; border-top: 1px solid #c4c9cb; display: flex; align-items: center; }
    .st { width: 22px; height: 22px; flex: none; display: flex; align-items: center; justify-content: center; }
    .st svg { width: 18px; height: 18px; }
    .st.on { background: #e0e2e4; border: 1px solid #b3b6b8; margin-left: 7px; }
    .st.g { margin-left: 4px; }
    .vs { width: 1px; height: 24px; background: #b3b7b9; margin-left: 9px; flex: none; }
    .bullet { width: 5px; height: 5px; border-radius: 50%; background: #14506c; margin: 0 5px 0 6px; flex: none; }
    .msg { flex: 1; white-space: nowrap; color: #4d5153; font-size: 11px; padding-bottom: 2px; }
    .find { display: flex; align-items: stretch; height: 24px; width: 42px; border: 1px solid #c4c7c9; margin-left: 3px; }
    .find .a { width: 14px; border-left: 1px solid #c4c7c9; display: flex; align-items: center; justify-content: center; }
    .find .a .tri, .combo .a .tri { margin: 0; }
    .find .b { flex: 1; padding: 2px; }
    .vl { width: 1px; height: 24px; background: #c4c7c9; margin-left: 3px; flex: none; }
    .combo { margin-left: 100px; margin-right: 18px; width: 177px; height: 24px; border: 1px solid #b3b6b8; display: flex; align-items: center; padding-left: 7px; background: #f7f9fb; color: #4d5153; }
    .combo span:first-child { flex: 1; }
    .combo .a { width: 15px; height: 22px; border-left: 1px solid #b3b6b8; display: flex; align-items: center; justify-content: center; }
  `;

  private small(it: Small) {
    return html`<div class="it ${it.d ? "d" : ""}"><span class="ic">${I[it.i]}</span>${it.t}${it.a ? tri : ""}</div>`;
  }

  private col(c: Col) {
    if (c.big) {
      const b = c.big;
      return html`<div class="big" style="width:${c.w}px"><span class="ic">${I[b.i]}</span>
        <span class="lb">${b.t}${b.a === "inline" ? tri : ""}</span>${b.a === "below" ? html`<span class="below">${tri}</span>` : ""}</div>`;
    }
    return html`<div class="col" style="width:${c.w}px">${c.items!.map((i) => this.small(i))}</div>`;
  }

  private group(g: Group) {
    const cols = g.cols.map((c, i) => {
      const node = this.col(c);
      return g.sepAfter === 1 && i === 1 ? html`${node}<div class="vsep"></div>` : node;
    });
    return html`<div class="grp" style="width:${g.w}px"><div class="g-body" style="padding-left:${g.pad ?? 0}px">${cols}</div>
      <div class="g-label">${g.label}${g.a ? tri : ""}</div></div>`;
  }

  render() {
    return html`<div class="frame">
      <div class="title">
        <div class="t-left">
          <span class="logo">${S(svg`<path d="M1 5l4-4h14v14l-4 4H1z" fill="#a9dcea" stroke="#2b7f9c" stroke-width="1.3"/><path d="M15 5l4-4v14l-4 4z" fill="#5ba8c4"/><path d="M1 5l4-4h14l-4 4z" fill="#d3edf5"/>`)}</span>
          <span class="creo">creo<sup>®</sup></span>
          ${qat.map((q) => html`<span class="qa" style="width:${q.w}px">${Q[q.k]}</span>`)}
          <span class="qsep"></span>
          <span class="custom"><i></i><span class="tri m0"></span></span>
        </div>
        <div class="t-mid">电热水壶 (活动的) - Creo Parametric 8.0</div>
        <div class="t-right">
          <span class="wc">${S(svg`<path d="M4 14h12" stroke="#b9bfc2" stroke-width="2"/>`)}</span>
          <span class="wc">${S(svg`<path d="M7 3h10v9H7zM3 7h10v10H3z" fill="#dbe1e3" stroke="#b9bfc2" stroke-width="1.5"/>`)}</span>
          <span class="wc">${S(svg`<path d="M4 3l12 14M16 3L4 17" stroke="#b9bfc2" stroke-width="2"/>`)}</span>
        </div>
      </div>

      <div class="menu">
        <div class="m file">文件</div>
        <div class="m on">模型</div>
        ${menus.map((m) => html`<div class="m">${m}</div>`)}
        <div class="m-right">
          <span>${S(svg`<path d="M3 13l7-7 7 7z" fill="#fff"/>`)}</span>
          <span>${S(svg`<circle cx="11" cy="8" r="4.5" fill="none" stroke="#fff" stroke-width="2"/><path d="M8 12l-4 5" stroke="#fff" stroke-width="2"/>`)}</span>
          <span>${S(svg`<path d="M6 6c0-5 9-5 9 0 0 3-4 3-4 7M11 15v3" fill="none" stroke="#fff" stroke-width="2.4"/>`)}</span>
        </div>
      </div>

      <div class="ribbon">${groups.map((g) => this.group(g))}</div>

      <div class="main">
        <div class="side">
          <div class="tabs">
            <div class="tab on"><span class="ic">${I.tabTree}</span>模型树</div>
            <div class="tab t2"><span class="ic">${I.tabFolders}</span>文件夹浏览器</div>
            <div class="tab t3"><span class="ic">${I.tabFav}</span>收藏夹</div>
          </div>
          <div class="tools">
            <b>模型树</b>
            <span class="t1">${I.hammer}</span><span class="tri m0"></span>
            <span class="t2">${I.list}</span><span class="tri m0"></span>
            <span class="t3">${I.hide}</span>
          </div>
          <div class="filterrow">
            <span class="fl">${I.filter}</span>
            <div class="input">×</div>
            <span class="tri pad-caret"></span>
            <span class="plus">${I.plus}</span>
          </div>
          <div class="treewrap">
            <div class="thead"><span></span><span>VOLUME</span></div>
            <div class="tb">
              <div class="l">
                <div class="row r0"><span class="ic">${I.prt}</span>电热水壶.PRT</div>
                <div class="row r2"><span class="exp"></span><span class="ic">${I.design}</span>设计项</div>
                <div class="row r1"><span class="ic">${I.planeS}</span>RIGHT</div>
                <div class="row r1"><span class="ic">${I.planeS}</span>TOP</div>
                <div class="row r1"><span class="ic">${I.planeS}</span>FRONT</div>
                <div class="row r3"><span class="ic">${I.csysS}</span>PRT_CSYS_DEF</div>
                <div class="green"></div>
              </div>
              <div class="r"></div>
            </div>
            <div class="sb">
              <div class="bar"><span class="ar b"><i class="al"></i></span><span class="trk"></span><span class="ar bl"><i class="arr"></i></span></div>
              <div class="bar"><span class="ar b"><i class="al dk"></i></span><span class="thumb"></span><span class="rest"></span><span class="ar bl"><i class="arr dk"></i></span></div>
            </div>
          </div>
        </div>

        <div class="canvas">
          <svg viewBox="313 190 1607 835" width="1607" height="835">
            <g fill="#a48e96" fill-opacity=".13" stroke="#a89a9e" stroke-width="1">
              <polygon points="981.7,292.7 1126.4,587.3 1011.3,959.3 866.3,664"/>
              <polygon points="835.5,439.7 1272.6,439.7 1158.4,812 720.4,812"/>
              <polygon points="705.8,478.3 1143,478.3 1287.6,773.7 850,773.7"/>
            </g>
            <path d="M997 626H1028" stroke="#f08f92" stroke-width="1.5"/><path d="M1014 623.5l10 2.5-10 2.5z" fill="#e8303a"/>
            <path d="M997 626L986 604" stroke="#a5e6a0" stroke-width="1"/><path d="M988 606l4 3 2 9-4-3z" fill="#2fe34f"/>
            <path d="M997 626L989 652" stroke="#a5e8ef" stroke-width="1"/><path d="M993 638l0 7-3 5-1-7z" fill="#3fe4ec"/>
            <g font-family="Liberation Sans, sans-serif" font-size="12">
              <text x="1029" y="624" fill="#e88a8e">X</text>
              <text x="975" y="603" fill="#66e466">Y</text>
              <text x="977" y="666" fill="#66e6ea">Z</text>
              <text x="998" y="636" fill="#7b6c70" font-size="11" letter-spacing=".7">PRT_CSYS_DEF</text>
            </g>
          </svg>
          <div class="toolbar">
            ${tools.map((t) => html`<div class="tool ${t.on ? "on" : ""}"><div class="in">${I[t.i]}</div></div>`)}
          </div>
          <div class="dims"><span>X.X+-0.1</span><span>X.XX+-0.01</span><span>X.XXX+-0.001</span><span>ANG.+-0.5</span></div>
        </div>
      </div>

      <div class="status">
        <span class="st on">${I.stLayout}</span>
        <span class="st g">${I.stGlobe}</span>
        <span class="st g">${I.stSquare}</span>
        <span class="vs"></span>
        <span class="bullet"></span>
        <span class="msg">用D:\\Creo8.0\\Creo8.0\\Creo 8.0.0.0\\Common Files\\templates\\mmns_part_solid_abs.prt作为模板。</span>
        <span class="vl"></span><span class="vl"></span>
        <div class="find"><span class="b">${I.binoc}</span><span class="a">${tri}</span></div>
        <span class="vl"></span>
        <div class="combo"><span>几何</span><span class="a">${tri}</span></div>
      </div>
    </div>`;
  }
}
